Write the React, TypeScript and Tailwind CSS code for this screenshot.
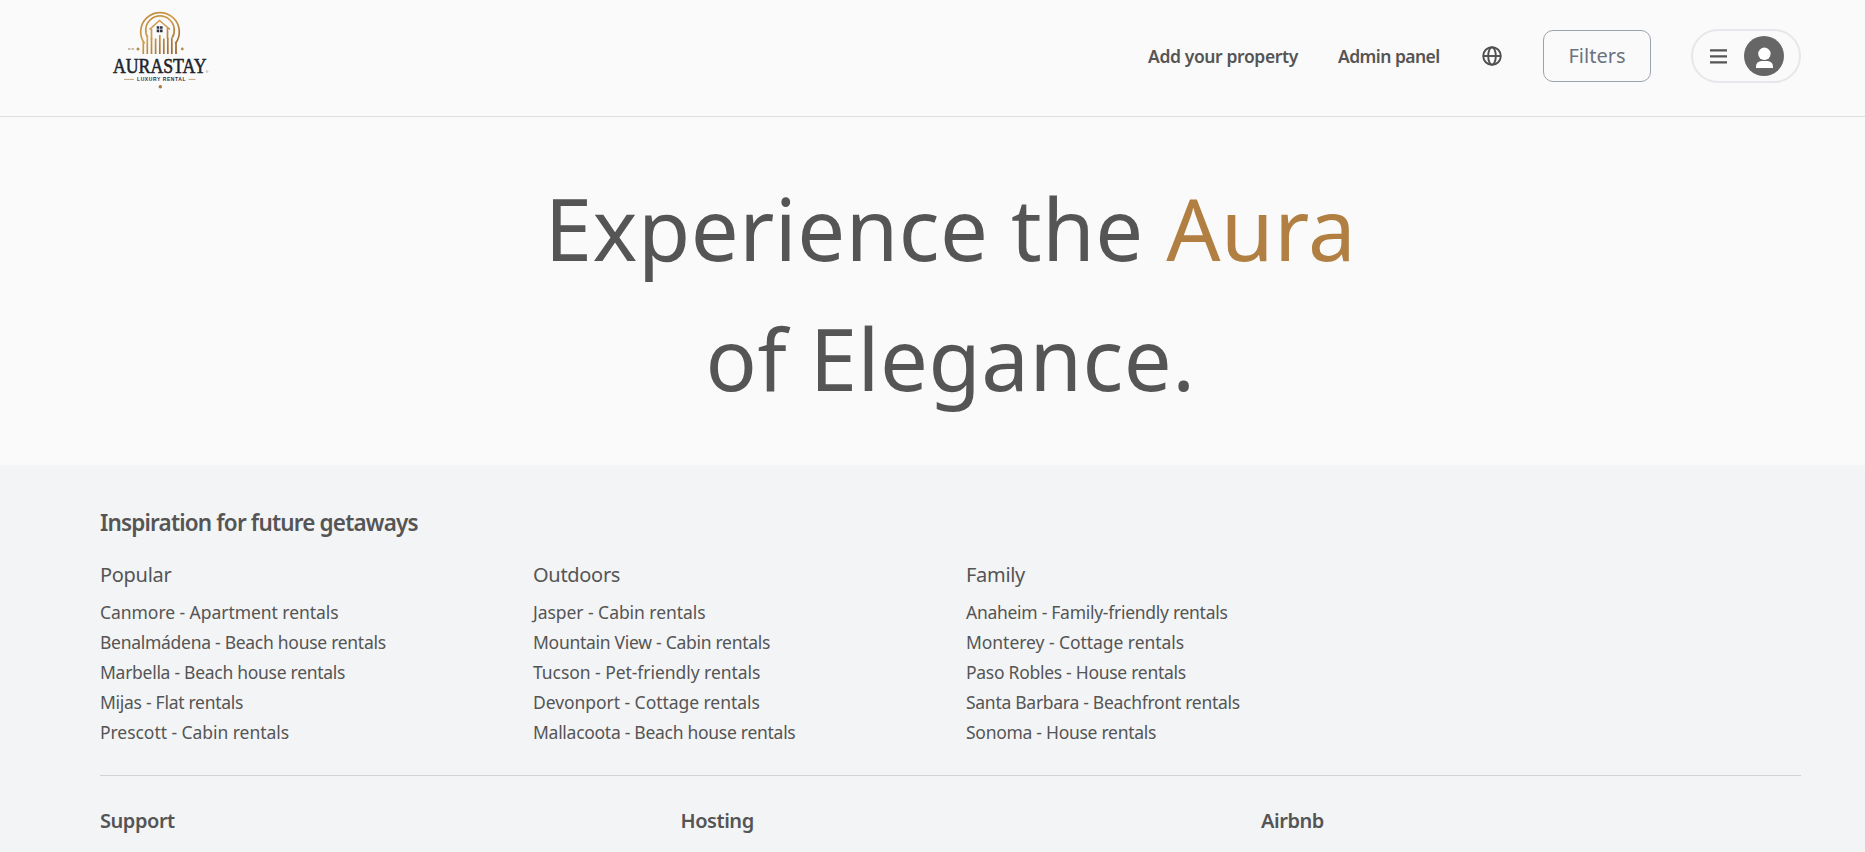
type Place = { name: string; tracking?: string };

const loose = "tracking-[-0.05px]";

const groups: { title: string; items: Place[] }[] = [
  {
    title: "Popular",
    items: [
      { name: "Canmore - Apartment rentals", tracking: loose },
      { name: "Benalmádena - Beach house rentals" },
      { name: "Marbella - Beach house rentals" },
      { name: "Mijas - Flat rentals" },
      { name: "Prescott - Cabin rentals", tracking: loose },
    ],
  },
  {
    title: "Outdoors",
    items: [
      { name: "Jasper - Cabin rentals", tracking: loose },
      { name: "Mountain View - Cabin rentals" },
      { name: "Tucson - Pet-friendly rentals", tracking: loose },
      { name: "Devonport - Cottage rentals", tracking: loose },
      { name: "Mallacoota - Beach house rentals" },
    ],
  },
  {
    title: "Family",
    items: [
      { name: "Anaheim - Family-friendly rentals" },
      { name: "Monterey - Cottage rentals", tracking: loose },
      { name: "Paso Robles - House rentals" },
      { name: "Santa Barbara - Beachfront rentals" },
      { name: "Sonoma - House rentals" },
    ],
  },
];

const sections = ["Support", "Hosting", "Airbnb"];

function Logo() {
  return (
    <svg viewBox="0 0 120 100" className="h-[100px] w-[120px]" fill="none">
      <defs>
        <linearGradient id="gold" x1="40" y1="10" x2="80" y2="55" gradientUnits="userSpaceOnUse">
          <stop offset="0" stopColor="#b8863b" />
          <stop offset="0.45" stopColor="#cf9d4c" />
          <stop offset="1" stopColor="#8a5a2b" />
        </linearGradient>
      </defs>
      <g stroke="url(#gold)" strokeWidth="1.7">
        <path d="M44.6 43.5A19.3 19.3 0 1 1 75.4 43.5" />
        <path d="M47.7 37.5A14.3 14.3 0 1 1 72.3 37.5" />
        <path d="M49.5 29.5 59.5 20.5 70 29.5" strokeWidth="1.5" />
        <path d="M51.5 29v10.5M67.5 28v10.5" />
        <path d="M43.3 54V42M47.3 54V37.5M51.5 54V38M55.6 54V38.5M59.8 54V35M63.8 54V38.5M67.8 54V38M71.8 54V37.5M76 54V42" />
      </g>
      <path d="M56.7 26.2h2.6v2.6h-2.6zM60 26.2h2.6v2.6H60zM56.7 29.6h2.6v2.6h-2.6zM60 29.6h2.6v2.6H60z" fill="#2d3340" />
      <circle cx="38" cy="49" r="1.5" fill="#b58a50" />
      <circle cx="82.3" cy="49" r="1.4" fill="#b58a50" />
      <path d="M28 49h2.5M31.5 49h2.5" stroke="#b9aa94" strokeWidth="1.6" />
      <text x="13" y="73.4" textLength="93.5" lengthAdjust="spacingAndGlyphs" fontSize="20.5" stroke="#20242b" strokeWidth="0.55" fill="#20242b" fontFamily="'Liberation Serif', serif">AURASTAY</text>
      <circle cx="107" cy="71.5" r="0.9" stroke="#999" strokeWidth="0.5" />
      <path d="M24 79.4h10M88.5 79.4h7" stroke="#c2a67c" strokeWidth="1" />
      <text x="37" y="81" textLength="48.5" fontSize="5" fontWeight="700" fill="#30353f" fontFamily="'Liberation Sans', sans-serif">LUXURY RENTAL</text>
      <circle cx="60.3" cy="86.7" r="1.7" fill="#a9793c" />
    </svg>
  );
}

function GlobeIcon() {
  return (
    <svg viewBox="0 0 20 20" className="size-5" fill="none" stroke="#4f4f4f" strokeWidth="1.9">
      <circle cx="10" cy="10" r="8.8" />
      <ellipse cx="10" cy="10" rx="3.8" ry="8.8" />
      <path d="M1.2 10h17.600" />
    </svg>
  );
}

export default function App() {
  return (
    <div className="flex h-[852px] flex-col overflow-hidden bg-[#fafafa] font-['Noto_Sans',sans-serif] text-[#555]">
      <header className="flex h-[117px] shrink-0 items-start justify-between border-b border-[#dedede] pr-16 pl-[100px]">
        <Logo />
        <nav className="flex h-[112px] items-center">
          <a className="w-[190px] text-[17.5px] font-semibold tracking-[-0.38px] whitespace-nowrap">Add your property</a>
          <a className="w-[144px] text-[17.5px] font-semibold tracking-[-0.55px] whitespace-nowrap">Admin panel</a>
          <GlobeIcon />
          <button className="ml-[41px] h-[52px] w-[108px] rounded-[10px] border border-[#9ca3af] text-xl text-[#6b7280]">Filters</button>
          <div className="ml-10 flex h-[54px] w-[110px] items-center rounded-full border-2 border-[#e5e7eb] pl-[17px]">
            <svg viewBox="0 0 17 15" className="h-[15px] w-[17px]" fill="#555">
              <path d="M0 .3h17v2.300H0zM0 6.300h17v2.300H0zM0 12.300h17v2.300H0z" />
            </svg>
            <svg viewBox="0 0 40 40" className="ml-[17px] size-10">
              <circle cx="20" cy="20" r="20" fill="#666" />
              <circle cx="20.4" cy="17.8" r="6.2" fill="#fff" />
              <path d="M12 32v-1.500a5.500 5.500 0 0 1 5.500-5.500h6a5.500 5.500 0 0 1 5.500 5.500v1.500z" fill="#fff" />
            </svg>
          </div>
        </nav>
      </header>

      <main className="h-[348px] shrink-0 pt-[46px] pr-16 pl-[100px] text-center">
        <h1 className="text-[85px] leading-[130px] tracking-[0.5px]">
          Experience the <span className="text-[#b17f42]">Aura</span>
          <br />
          of Elegance.
        </h1>
      </main>

      <footer className="grow bg-[#f3f4f6] pt-10 pr-16 pl-[100px]">
        <h2 className="text-[22.5px] leading-[35px] font-semibold tracking-[-0.83px]">Inspiration for future getaways</h2>
        <div className="mt-5 flex">
          {groups.map((group) => (
            <section key={group.title} className="w-[433px]">
              <h3 className="text-xl leading-[30px] tracking-[-0.3px]">{group.title}</h3>
              <ul className="mt-[7px] text-[17.5px] leading-[30px] tracking-[-0.28px]">
                {group.items.map((item) => (
                  <li key={item.name} className={item.tracking}>{item.name}</li>
                ))}
              </ul>
            </section>
          ))}
        </div>
        <div className="mt-7 flex border-t border-[#d1d3d6] pt-[30px]">
          {sections.map((name) => (
            <h3 key={name} className="w-[580.5px] shrink-0 text-xl leading-[30px] font-semibold tracking-[-0.45px]">{name}</h3>
          ))}
        </div>
      </footer>
    </div>
  );
}
